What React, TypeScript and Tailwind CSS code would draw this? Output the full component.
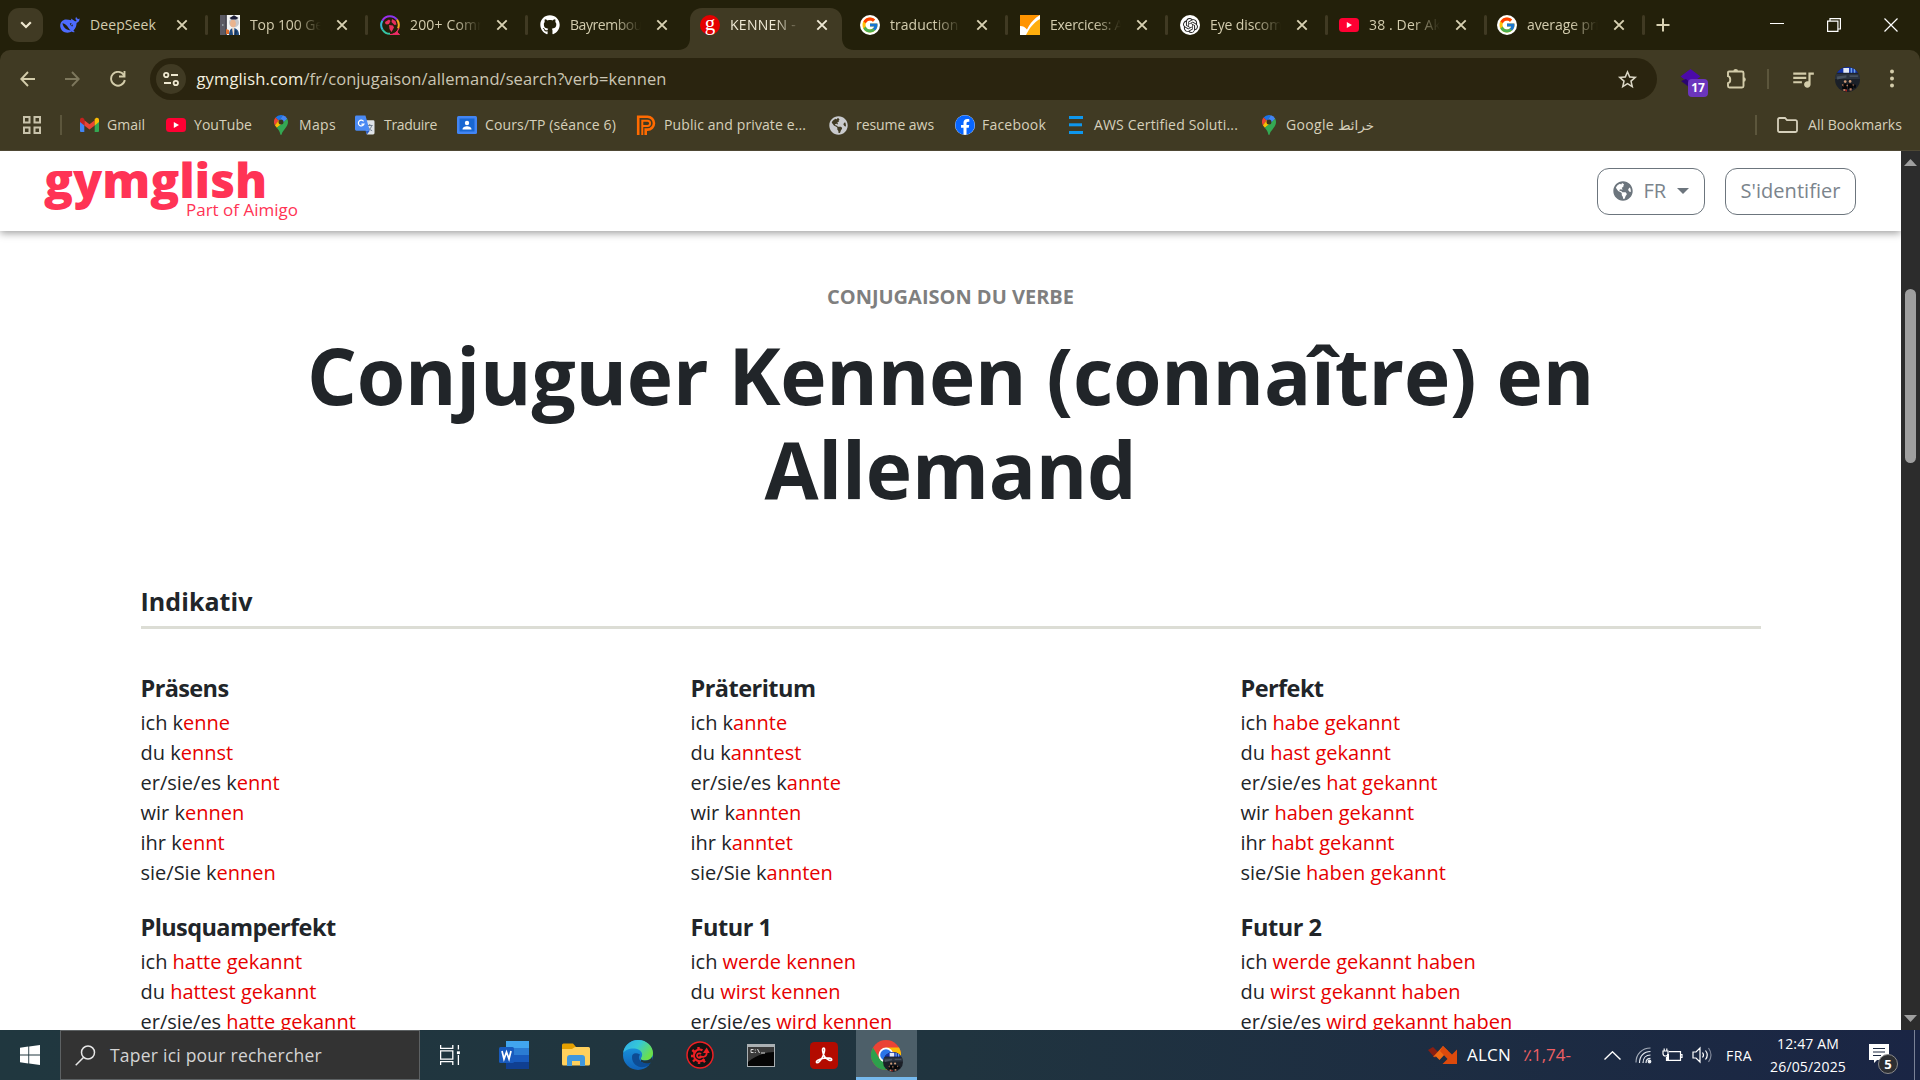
import React, { useLayoutEffect, useRef, useState } from "react";
import { FaGithub, FaFacebook, FaGlobeAmericas } from "react-icons/fa";
import { FcGoogle } from "react-icons/fc";
import { SiOpenai } from "react-icons/si";
import { MdStarBorder, MdQueueMusic } from "react-icons/md";

/** Single line of text whose letter spacing is tuned so that it fills `w` pixels. */
function Fit({ w, children, className = "" }: { w: number; children: string; className?: string }) {
  const ref = useRef<HTMLSpanElement>(null);
  const [ls, setLs] = useState(0);
  useLayoutEffect(() => {
    if (ref.current) setLs((w - ref.current.getBoundingClientRect().width) / children.length);
  }, [w, children]);
  return (
    <span ref={ref} className={"inline-block shrink-0 whitespace-pre " + className} style={{ letterSpacing: ls }}>
      {children}
    </span>
  );
}

/* ---------- favicons ---------- */
const DeepSeek = () => (
  <svg width="20" height="20" viewBox="0 0 20 20" fill="#4d6bfe">
    <path d="M19.6 3.600c-.9.5-1.400.4-2 .1-.9-.5-1.200-1.300-1.300-1.900-.8.8-1 1.900-.5 2.900.3.7.7 1 1 1.400-.8.3-1.900.1-2.800-.7L11.700 3.900c-.5-.4-1-.3-.8.2.3.8.7 1 .3 1.200C8.600 4.700 6 3.900 3.800 4.900 1.200 6 0 8.500.2 11.300.5 15 3.600 17.800 7.400 17.800c1.900 0 3.200-.6 4.100-1.200 1 .5 2.600.8 3.100.4.4-.4-.6-.7-1.200-1.300C15.700 13.300 16.500 10.600 16.600 8c1.700-.5 3-1.900 3-4.400z" />
    <path d="M2.500 8.300c2.500.3 4.500 2.100 5.700 4.200.8 1.300 1.600 2.200 2.400 2.700-2.200.3-4.100-.5-5.700-2.100C3.600 11.700 2.700 10 2.500 8.300z" fill="#23200b" />
    <path d="M9.800 8.200c1.800-.3 3.500 1.500 2.900 3.100-.9.3-2.600-.8-2.900-3.100z" fill="#23200b" />
    <circle cx="11.600" cy="9.700" r=".8" />
  </svg>
);
const Person = () => (
  <svg width="20" height="20" viewBox="0 0 20 20">
    <rect width="20" height="20" fill="#f4f5f5" />
    <rect width="6.500" height="20" fill="#5b5a64" />
    <rect x="5.500" width="1.200" height="20" fill="#3a3a45" />
    <rect x="2" y="9" width="1.500" height="2" fill="#8f9aa0" />
    <ellipse cx="14" cy="7.500" rx="5" ry="5" fill="#c4c6ca" />
    <ellipse cx="13" cy="8.500" rx="2.900" ry="3.800" fill="#eab48e" />
    <path d="M9.500 3L14 .3 18.500 3 16 4.500h-4.500z" fill="#1d1f3a" />
    <path d="M9 20c0-4.500 2-7 4.500-7s5.500 2 5.500 7z" fill="#1f4b80" />
    <path d="M12 12.500h2.500l-.5 7.500h-1z" fill="#f3dcc8" />
    <path d="M6 14l3 1v4H6z" fill="#e2702e" />
    <path d="M15 15l2 1-1 4h-1z" fill="#143055" />
  </svg>
);
const GlobeRing = () => (
  <svg width="20" height="20" viewBox="0 0 20 20" fill="none">
    <path d="M10 1.200A8.800 8.800 0 0 0 2.300 5.700" stroke="#9b2ff0" strokeWidth="2" />
    <path d="M10 1.200A8.800 8.800 0 0 1 17 4.700" stroke="#8a35f0" strokeWidth="2" />
    <path d="M17 4.700A8.800 8.800 0 0 1 18 13.500" stroke="#f5a623" strokeWidth="2" />
    <path d="M2.300 5.700a8.800 8.800 0 0 0 .3 9" stroke="#35b6d5" strokeWidth="2" />
    <path d="M2.600 14.700A8.800 8.800 0 0 0 10 18.800" stroke="#35c6a5" strokeWidth="2" />
    <path d="M18.800 13.500L17 17l2.500 2.800L10 19.500c4 0 7-2.500 8.800-6z" fill="#ef2d68" stroke="#ef2d68" />
    <path d="M5 7l4-2.500 1.500 1.500-1.500 3-2 .5L5.500 9z M12 4l3.500 2 1 3.500-2 .5-3-3z M9 10l4 .5 1 2-2.500 4.500L9.500 14z" fill="#e8305e" />
  </svg>
);
const GymFav = () => (
  <div className="flex h-5 w-5 items-center justify-center rounded-full bg-[#e50000] pb-1 font-['Liberation_Serif',serif] text-[21px] leading-none text-white">g</div>
);
const GoogleFav = () => (
  <div className="flex h-5 w-5 items-center justify-center rounded-full bg-white"><FcGoogle size={18} /></div>
);
const ExerFav = () => (
  <svg width="20" height="20" viewBox="0 0 20 20">
    <rect width="20" height="20" fill="#fff" />
    <path d="M0 0h20C15 3 10 8 7 14.500 5 12 3 11 0 11z" fill="#ff9400" />
    <path d="M20 4v16H6C9 14 13 8 20 4z" fill="#ffae0d" />
  </svg>
);
const GptFav = () => (
  <div className="flex h-5 w-5 items-center justify-center rounded-full bg-white"><SiOpenai size={15} color="#222" /></div>
);
const YtFav = () => (
  <svg width="20" height="20" viewBox="0 0 20 20">
    <rect y="3" width="20" height="14" rx="3.500" fill="#ff0033" />
    <path d="M7.800 7v6l5.200-3z" fill="#fff" />
  </svg>
);
const GmailFav = () => (
  <svg width="19" height="20" viewBox="0 0 19 20">
    <path d="M0 5v11a1 1 0 0 0 1 1h3.300V8.500z" fill="#4285f4" />
    <path d="M19 5v11a1 1 0 0 1-1 1h-3.300V8.500z" fill="#34a853" />
    <path d="M4.300 5.200v5.200l5.200 4 5.200-4V5.200l-5.200 4z" fill="#ea4335" />
    <path d="M0 5c0-2 2-2.700 3.300-1.700l1 .8v6.300L0 7z" fill="#c5221f" />
    <path d="M19 5c0-2-2-2.700-3.300-1.700l-1 .8v6.300L19 7z" fill="#fbbc04" />
  </svg>
);
const MapFav = () => (
  <svg width="14" height="20" viewBox="0 0 14 20">
    <path d="M7 0a7 7 0 0 0-5.400 2.500L4.800 5.500 9 .3A7 7 0 0 0 7 0z" fill="#1a73e8" />
    <path d="M9 .3L4.800 5.500 9.200 8.700l4-5A7 7 0 0 0 9 .3z" fill="#4285f4" />
    <path d="M1.600 2.500A7 7 0 0 0 .9 10.300L4.800 5.500z" fill="#ea4335" />
    <path d="M.9 10.300l1.900 2.500L9.200 8.700 4.800 5.300z" fill="#fbbc04" />
    <path d="M13.200 3.700L2.800 12.800C5 15.200 5.800 17 6.300 19.200c.2 1 1.200 1 1.400 0C8.500 15.500 14 12 14 7a7 7 0 0 0-.8-3.300z" fill="#34a853" />
    <circle cx="7" cy="7" r="2.500" fill="#3a3520" />
  </svg>
);
const TransFav = () => (
  <svg width="20" height="20" viewBox="0 0 21 20">
    <path d="M8 5h11a1.500 1.500 0 0 1 1.500 1.500v12A1.500 1.500 0 0 1 19 20h-6.500z" fill="#dfe3e8" />
    <path d="M12.500 10.500h6M15.500 9v1.500M13.500 16c2.500-1.500 3.600-3.500 4-5.500M14 12.500c.7 1.500 2 2.700 4 3.500" stroke="#6b7a8a" fill="none" />
    <path d="M1.500 0H11l4.500 16H1.500A1.500 1.500 0 0 1 0 14.500v-13A1.500 1.500 0 0 1 1.500 0z" fill="#4a8af4" />
    <path d="M12.500 20L11 16h4.500z" fill="#2a5cc4" />
    <path d="M9 6.200A3 3 0 1 0 9.400 9H6.700" stroke="#fff" strokeWidth="1.300" fill="none" />
  </svg>
);
const CoursFav = () => (
  <svg width="20" height="20" viewBox="0 0 20 20">
    <rect y="1" width="20" height="18" rx="1.500" fill="#4285f4" />
    <rect x="2.500" y="3.500" width="15" height="13" fill="#1967d2" />
    <circle cx="10" cy="8" r="2.200" fill="#fff" />
    <path d="M5.500 14.500c0-2.500 3-3.200 4.500-3.200s4.500.7 4.500 3.200z" fill="#fff" />
  </svg>
);
const PFav = () => (
  <svg width="20" height="20" viewBox="0 0 20 20" fill="none" stroke="#ff6a00">
    <path d="M2.200 20V1.700h9.300a6.300 6.300 0 0 1 0 12.900H9.700V20" strokeWidth="2.600" />
    <path d="M6.300 20V5.700h5.200a2.500 2.500 0 0 1 0 5.200H6.300" strokeWidth="2" />
  </svg>
);
const GlobeFav = () => <FaGlobeAmericas size={19} color="#c9cacd" />;
const FbFav = () => <div className="h-5 w-5 rounded-full bg-white"><FaFacebook size={20} color="#0866ff" /></div>;
const AwsFav = () => (
  <svg width="14" height="20" viewBox="0 0 14 20" fill="#0e97ee">
    <rect y="1" width="14" height="3" /><rect y="8.300" width="13" height="3" /><rect y="16" width="14" height="3" />
  </svg>
);

/* ---------- browser chrome ---------- */
type Tab = { icon: React.ReactNode; title: string; w: number; active?: boolean; sep?: boolean; width?: string };
const tabs: Tab[] = [
  { icon: <DeepSeek />, title: "DeepSeek", w: 66, sep: true },
  { icon: <Person />, title: "Top 100 Ge", w: 73, sep: true },
  { icon: <GlobeRing />, title: "200+ Comr", w: 73, sep: true },
  { icon: <FaGithub size={20} color="#fff" />, title: "Bayrembou", w: 72 },
  { icon: <GymFav />, title: "KENNEN - ", w: 70, active: true },
  { icon: <GoogleFav />, title: "traduction ", w: 72, sep: true },
  { icon: <ExerFav />, title: "Exercices: A", w: 73, sep: true },
  { icon: <GptFav />, title: "Eye discom", w: 72, sep: true, width: "w-[159px]" },
  { icon: <YtFav />, title: "38 . Der Ak", w: 72, sep: true, width: "w-[158px]" },
  { icon: <GoogleFav />, title: "average pri", w: 72, sep: true, width: "w-[159px]" },
];

const Cross = ({ color }: { color: string }) => (
  <svg width="12" height="12" viewBox="0 0 12 12" stroke={color} strokeWidth="1.900"><path d="M1.300 1.300l9.400 9.400M10.700 1.300L1.300 10.700" /></svg>
);

function TabItem({ t }: { t: Tab }) {
  return (
    <div className={"relative flex h-[34px] shrink-0 items-center pl-[10px] " + (t.width ?? "w-[160px]")}>
      {t.active && (
        <svg className="absolute -left-[12px] top-0" width="176" height="42" viewBox="0 0 176 42">
          <path d="M0 42c8 0 12-5 12-12V12C12 5 17 0 24 0h128c7 0 12 5 12 12v18c0 7 4 12 12 12z" fill="#403a23" />
        </svg>
      )}
      <div className="relative flex w-[30px] shrink-0">{t.icon}</div>
      <div className={"relative w-[74px] shrink-0 text-[14px] leading-5 " + (t.title === "DeepSeek" ? "" : "[mask-image:linear-gradient(to_right,#000_60%,transparent_96%)] ") + (t.active ? "text-[#efe9d5]" : "text-[#d3ccae]")}>
        <Fit w={t.w}>{t.title}</Fit>
      </div>
      <div className="relative ml-[12px] flex shrink-0"><Cross color={t.active ? "#efe9d5" : "#d8d1b2"} /></div>
      {t.sep && <div className="ml-[17px] h-5 w-[3px] shrink-0 rounded bg-[#403a23]" />}
    </div>
  );
}

function TabStrip() {
  return (
    <div className="flex h-[50px] items-start bg-[#23200a] pt-2">
      <div className="ml-2 mr-[7px] flex h-[34px] w-[35px] shrink-0 items-center justify-center rounded-[11px] bg-[#403a23]">
        <svg width="12" height="8" viewBox="0 0 12 8" fill="none" stroke="#eee7cf" strokeWidth="2.200"><path d="M1.200 1.200L6 6l4.800-4.800" /></svg>
      </div>
      {tabs.map((t) => <TabItem key={t.title} t={t} />)}
      <div className="ml-[10px] flex h-[34px] items-center">
        <svg width="14" height="14" stroke="#d8d1b2" strokeWidth="2"><path d="M7 .5v13M.5 7h13" /></svg>
      </div>
      <div className="ml-auto mr-[22px] flex h-[34px] items-center gap-[43px]">
        <svg width="14" height="14" stroke="#fff" strokeWidth="1"><path d="M0 5.500h14" /></svg>
        <svg width="14" height="14" fill="none" stroke="#fff" strokeWidth="1.200"><path d="M.6 3.100h10.300v10.300H.6zM3 3V.6h10.400v10.400H11" /></svg>
        <svg width="14" height="14" stroke="#fff" strokeWidth="1.200"><path d="M.5.5l13 13M13.500.5l-13 13" /></svg>
      </div>
    </div>
  );
}

function Avatar({ size }: { size: number }) {
  return (
    <svg width={size} height={size} viewBox="0 0 24 24">
      <clipPath id="av"><circle cx="12" cy="12" r="12" /></clipPath>
      <g clipPath="url(#av)">
        <rect width="24" height="24" fill="#1b2028" />
        <rect width="24" height="5.500" fill="#1432a8" />
        <path d="M8 1h5.500v4.500H8z" fill="#e4eaf4" />
        <path d="M15 1h1.500v4.500H15zM18 1h1.500v4.500H18z" fill="#6fa5e8" />
        <path d="M0 6.500h24v5H0z" fill="#2b333f" />
        <path d="M2 9l9-1v2l-9 2zM14 8h8v1.500h-8z" fill="#47525f" />
        <path d="M7 16h4.500v5H7zM12.500 16h5v5h-5zM18 17h2v3h-2z" fill="#060608" />
        <circle cx="9.800" cy="14" r="1.300" fill="#cf9b78" /><circle cx="14.500" cy="13.800" r="1.300" fill="#cf9b78" />
        <path d="M6.500 17l1.500-1v3zM17 16l1.500 1.500L17 18zM8 21h2v2H8zM14 20.500h2v2h-2zM11 17h1.500v1.500H11z" fill="#b5795c" />
        <path d="M10 21.500h1.500v2H10z" fill="#b0201c" />
      </g>
    </svg>
  );
}

function Toolbar() {
  return (
    <div className="bg-[#23200a]">
      <div className="flex h-[50px] items-center rounded-t-[10px] bg-[#403a23] pt-2">
        <div className="ml-5 flex w-[130px] shrink-0 items-center text-[#d3ccaa]">
          <svg width="15" height="16" viewBox="0 0 15 16" fill="none" stroke="currentColor" strokeWidth="1.900"><path d="M15 8H1.500M8 1L1.300 8 8 15" /></svg>
          <svg className="ml-[30px]" width="15" height="16" viewBox="0 0 15 16" fill="none" stroke="#7d775c" strokeWidth="1.900"><path d="M0 8h13.500M7 1l6.700 7L7 15" /></svg>
          <svg className="ml-[30px]" width="16" height="16" viewBox="0 0 16 16" fill="none" stroke="currentColor" strokeWidth="1.900"><path d="M13.800 4A6.900 6.900 0 1 0 14.800 9M14.500 0V5.500H9" /></svg>
        </div>
        <div className="flex h-[42px] w-[1507px] shrink-0 items-center rounded-full bg-[#2a240f]">
          <div className="ml-[6px] flex h-[30px] w-[30px] items-center justify-center rounded-full bg-[#403a23]">
            <svg width="16" height="16" viewBox="0 0 16 16" fill="none" stroke="#eee8d0" strokeWidth="1.800"><circle cx="3.200" cy="4" r="2.200" /><path d="M8 4h7M1 12h7" /><circle cx="12.800" cy="12" r="2.200" /></svg>
          </div>
          <div className="ml-[10.500px] mt-[1px] flex text-[16.500px] text-[#cbc6b4]">
            <Fit w={107} className="text-[#f3efdf]">gymglish.com</Fit>
            <Fit w={363}>/fr/conjugaison/allemand/search?verb=kennen</Fit>
          </div>
          <MdStarBorder size={23} color="#dbd7c6" className="ml-auto mr-[18px]" />
        </div>
        <div className="relative ml-[22px] h-[26px] w-7 shrink-0">
          <svg width="28" height="26" viewBox="0 0 28 26"><path d="M11.500 3l10 7.500-10 7.500-10-7.500z" fill="#4b0aa8" /><path d="M2 15l5-2 6 5-3 3z" fill="#2a0470" /></svg>
          <div className="absolute left-[9px] top-[13px] flex h-[18px] w-5 items-center justify-center rounded-[4px] bg-[#6b35bd] text-[12px] font-bold leading-none text-white">17</div>
        </div>
        <svg className="ml-[19px] shrink-0" width="22" height="22" viewBox="0 0 22 22" fill="none" stroke="#d3ccaa" strokeWidth="1.900">
          <path d="M3 3.500h13a1.500 1.500 0 0 1 1.500 1.500v13a1.500 1.500 0 0 1-1.500 1.500H3.500A1.500 1.500 0 0 1 2 18v-2.800c3-.8 3-6.200 0-7V4.500a1 1 0 0 1 1-1z" />
          <path d="M7.300 3.500a2.400 2.400 0 0 1 4.800 0zM17.500 9.200a2.300 2.300 0 0 1 0 4.600z" fill="#d3ccaa" stroke="none" />
        </svg>
        <div className="ml-[19px] h-5 w-[2px] bg-[#5c563c]" />
        <MdQueueMusic size={26} color="#d3ccaa" className="ml-[21px] shrink-0" />
        <div className="ml-[19px] shrink-0"><Avatar size={25} /></div>
        <svg className="ml-[29px] shrink-0" width="6" height="20" fill="#d3ccaa"><circle cx="3" cy="2.500" r="2" /><circle cx="3" cy="9.500" r="2" /><circle cx="3" cy="16.500" r="2" /></svg>
      </div>
    </div>
  );
}

type Mark = { icon: React.ReactNode; text: string; w: number; box: string; gap: string };
const marks: Mark[] = [
  { icon: <GmailFav />, text: "Gmail", w: 38, box: "w-[86px]", gap: "w-[27px]" },
  { icon: <YtFav />, text: "YouTube", w: 58, box: "w-[108px]", gap: "w-[28px]" },
  { icon: <MapFav />, text: "Maps", w: 37, box: "w-[81px]", gap: "w-[25px]" },
  { icon: <TransFav />, text: "Traduire", w: 53, box: "w-[102px]", gap: "w-[29px]" },
  { icon: <CoursFav />, text: "Cours/TP (séance 6)", w: 131, box: "w-[179px]", gap: "w-[28px]" },
  { icon: <PFav />, text: "Public and private e...", w: 142, box: "w-[193px]", gap: "w-[28px]" },
  { icon: <GlobeFav />, text: "resume aws", w: 78, box: "w-[126px]", gap: "w-[27px]" },
  { icon: <FbFav />, text: "Facebook", w: 64, box: "w-[114px]", gap: "w-[27px]" },
  { icon: <AwsFav />, text: "AWS Certified Soluti...", w: 144, box: "w-[193px]", gap: "w-[25px]" },
];

function Bookmarks() {
  return (
    <div className="flex h-[51px] items-center border-b border-[#4e4834] bg-[#403a23] text-[14px] text-[#d6d0bb]">
      <svg className="ml-[23px] shrink-0" width="18" height="18" fill="none" stroke="#c9c3ab" strokeWidth="2"><path d="M1 1h5.500v5.500H1zM11.500 1H17v5.500h-5.500zM1 11.500h5.500V17H1zM11.500 11.500H17V17h-5.500z" /></svg>
      <div className="ml-[19px] mr-[18px] h-5 w-[2px] shrink-0 bg-[#5c563c]" />
      {marks.map((m) => (
        <div key={m.text} className={"flex shrink-0 items-center " + m.box}>
          <div className={"shrink-0 " + m.gap}>{m.icon}</div>
          <Fit w={m.w} className="-mt-[2px]">{m.text}</Fit>
        </div>
      ))}
      <div className="flex shrink-0 items-center">
        <div className="w-[24px]"><MapFav /></div>
        <Fit w={48} className="-mt-[2px]">Google</Fit>
        <span className="ml-1 text-[13.500px] font-['DejaVu_Sans',sans-serif]" dir="rtl">خرائط</span>
      </div>
      <div className="ml-auto h-5 w-[2px] bg-[#5c563c]" />
      <svg className="ml-[20px]" width="21" height="16" viewBox="0 0 21 16" fill="none" stroke="#d6d0bb" strokeWidth="1.800"><path d="M1 2.500A1.500 1.500 0 0 1 2.500 1H8l2 2.200h8.500A1.500 1.500 0 0 1 20 4.700v8.800a1.500 1.500 0 0 1-1.500 1.500h-16A1.500 1.500 0 0 1 1 13.500z" /></svg>
      <Fit w={94} className="-mt-[2px] ml-[10px] mr-[18px]">All Bookmarks</Fit>
    </div>
  );
}

/* ---------- page ---------- */
type Row = [string, string];
const tenses: { name: string; w: number; rows: Row[] }[] = [
  { name: "Präsens", w: 88, rows: [["ich k", "enne"], ["du k", "ennst"], ["er/sie/es k", "ennt"], ["wir k", "ennen"], ["ihr k", "ennt"], ["sie/Sie k", "ennen"]] },
  { name: "Präteritum", w: 125, rows: [["ich k", "annte"], ["du k", "anntest"], ["er/sie/es k", "annte"], ["wir k", "annten"], ["ihr k", "anntet"], ["sie/Sie k", "annten"]] },
  { name: "Perfekt", w: 83, rows: [["ich ", "habe gekannt"], ["du ", "hast gekannt"], ["er/sie/es ", "hat gekannt"], ["wir ", "haben gekannt"], ["ihr ", "habt gekannt"], ["sie/Sie ", "haben gekannt"]] },
  { name: "Plusquamperfekt", w: 195, rows: [["ich ", "hatte gekannt"], ["du ", "hattest gekannt"], ["er/sie/es ", "hatte gekannt"]] },
  { name: "Futur 1", w: 81, rows: [["ich ", "werde kennen"], ["du ", "wirst kennen"], ["er/sie/es ", "wird kennen"]] },
  { name: "Futur 2", w: 81, rows: [["ich ", "werde gekannt haben"], ["du ", "wirst gekannt haben"], ["er/sie/es ", "wird gekannt haben"]] },
];

function Page() {
  return (
    <div className="flex h-[879px] overflow-hidden bg-white">
      <div className="w-[1901px] shrink-0 overflow-hidden text-[#212529]">
        <header className="relative flex h-20 items-center bg-white shadow-[0_2px_8px_rgba(0,0,0,0.4)]">
          <div className="ml-[44px] flex h-20 w-[260px] flex-col items-start text-[#ff3355]">
            <Fit w={223} className="-mt-[3px] h-[50px] text-[48px] font-extrabold leading-[64px]">gymglish</Fit>
            <Fit w={112} className="ml-[142px] text-[17px] leading-6">Part of Aimigo</Fit>
          </div>
          <div className="ml-auto mr-[45px] flex gap-5 text-[20px] text-[#6c757d]">
            <div className="flex h-[47px] w-[108px] items-center rounded-[12px] border border-[#6c757d] pl-[15px]">
              <FaGlobeAmericas size={20} />
              <span className="ml-[10.500px] text-[#7b848c]">FR</span>
              <svg className="ml-[10.500px]" width="12" height="6" fill="#6c757d"><path d="M0 0h12L6 6z" /></svg>
            </div>
            <div className="flex h-[47px] w-[131px] items-center justify-center rounded-[12px] border border-[#6c757d] text-[#7b848c]">
              <Fit w={100}>S'identifier</Fit>
            </div>
          </div>
        </header>
        <div className="flex flex-col items-center pt-[51px]">
          <Fit w={247} className="text-[20px] font-bold leading-[30px] text-[#7f7f7f]">CONJUGAISON DU VERBE</Fit>
          <h1 className="mt-[16px] flex flex-col items-center text-[78.400px] font-bold leading-[94px]">
            <Fit w={1287}>Conjuguer Kennen (connaître) en</Fit>
            <Fit w={372}>Allemand</Fit>
          </h1>
        </div>
        <div className="ml-[140.500px] w-[1620px]">
          <h2 className="mt-[68px] h-[45px] border-b-[3px] border-[#dcddd5] text-[25px] font-bold leading-[34px]"><Fit w={112}>Indikativ</Fit></h2>
          <div className="grid grid-cols-3 gap-x-[30px] pt-[42px]">
            {tenses.map((t) => (
              <div key={t.name} className="h-[239px]">
                <h3 className="mb-[3px] h-[34px] text-[23.500px] font-bold leading-[34px]"><Fit w={t.w}>{t.name}</Fit></h3>
                {t.rows.map(([a, b], i) => (
                  <div key={i} className="h-[30px] whitespace-pre text-[20px] leading-[30px]">{a}<span className="text-[#e60000]">{b}</span></div>
                ))}
              </div>
            ))}
          </div>
        </div>
      </div>
      <div className="flex w-[19px] shrink-0 flex-col items-center bg-[#2c2c2c] pt-2">
        <svg width="13" height="7" fill="#9f9f9f"><path d="M0 7h13L6.500 0z" /></svg>
        <div className="mt-[123px] h-[174px] w-[11px] rounded-full bg-[#9f9f9f]" />
        <svg className="mb-[8px] mt-auto" width="13" height="7" fill="#9f9f9f"><path d="M0 0h13L6.500 7z" /></svg>
      </div>
    </div>
  );
}

/* ---------- taskbar ---------- */
const Word = () => (
  <svg width="30" height="28" viewBox="0 0 30 28">
    <rect x="7" width="23" height="7" fill="#41a5ee" /><rect x="7" y="7" width="23" height="7" fill="#2b7cd3" />
    <rect x="7" y="14" width="23" height="7" fill="#185abd" /><rect x="7" y="21" width="23" height="7" fill="#103f91" />
    <rect y="6" width="15" height="16" rx="1.500" fill="#185abd" />
    <path d="M3 10l2 8 2.500-7 2.500 7 2-8" fill="none" stroke="#fff" strokeWidth="1.700" />
  </svg>
);
const Explorer = () => (
  <svg width="28" height="24" viewBox="0 0 28 24">
    <path d="M0 2a1.500 1.500 0 0 1 1.500-1.500H11L14 4v5H0z" fill="#e5a000" />
    <path d="M0 6h10l3-2h13.500A1.500 1.500 0 0 1 28 5.500V21a1.500 1.500 0 0 1-1.500 1.500h-25A1.500 1.500 0 0 1 0 21z" fill="#ffd05c" />
    <path d="M5 23v-8a3 3 0 0 1 3-3h12a3 3 0 0 1 3 3v8h-5v-5h-8v5z" fill="#3f97dd" />
  </svg>
);
const Edge = () => (
  <svg width="30" height="30" viewBox="0 0 30 30">
    <defs>
      <linearGradient id="e1" x1="0" y1="0" x2="1" y2=".5"><stop offset="0" stopColor="#2fa8e8" /><stop offset=".5" stopColor="#35c8d8" /><stop offset="1" stopColor="#6be04a" /></linearGradient>
      <linearGradient id="e2" x1="0" y1="0" x2="0" y2="1"><stop offset="0" stopColor="#1ba0e6" /><stop offset="1" stopColor="#1061b8" /></linearGradient>
    </defs>
    <circle cx="15" cy="15" r="15" fill="url(#e2)" />
    <path d="M.2 13C1 5.500 7.500 0 15 0c9 0 15 6.500 15 13 0 5-3.500 7.500-8 7.500-3 0-5-1-4-2.500 3-4 0-9-6-9.500C6.500 8 2 10 .2 13z" fill="url(#e1)" />
    <path d="M18 18c-1 1.500 1 2.500 4 2.500 3.500 0 6-1.300 7.200-4L30 24l-4 1-8-3z" fill="#20363f" />
    <path d="M9 17c0 7 6 11 12 10 3-.5 5.500-2 7-4.500-4 1.500-8 1-10.500-1.500-2-2-2-4.500-.5-6.500-4-2-8-1.500-8 2.500z" fill="#0d4c94" />
  </svg>
);
const RedGear = () => (
  <svg width="28" height="28" viewBox="0 0 28 28" fill="none" stroke="#ed2024">
    <circle cx="14" cy="14" r="13" fill="#141414" strokeWidth="1.500" />
    <path d="M16.500 9.200A5.800 5.800 0 1 0 18.300 18" strokeWidth="2.200" />
    <path d="M12.500 9V6M8.600 11L6.300 9M7.500 15H5M9 18.500l-2 2M13 20.500V23M17 19l2 2.200" strokeWidth="2.400" />
    <path d="M15 13a2.300 2.300 0 1 0 0 3.200M13.500 15c2.500 1.500 7 1.500 7.200-3" strokeWidth="1.800" />
    <path d="M17 12l3.700-5.500 3 5.500z" fill="#ed2024" stroke="none" />
  </svg>
);
const Cmd = () => (
  <svg width="28" height="23" viewBox="0 0 28 23">
    <rect width="28" height="23" fill="#aab0b3" /><rect x="1" y="3" width="26" height="19" fill="#050505" />
    <path d="M1 3h26v5C18 8 8 12 1 18z" fill="#3a3a3a" />
    <path d="M6.500 5.500H4v3h2.500M8.300 5.500v1M8.300 8v1M10.500 5l2 4M14 9h4" stroke="#e8e8e8" fill="none" strokeWidth=".9" />
  </svg>
);
const Acrobat = () => (
  <svg width="28" height="27" viewBox="0 0 28 27">
    <rect width="28" height="27" rx="4.500" fill="#b30b00" />
    <path d="M13.500 6c2 0 1 5-1 9-1.700 3.500-4.500 6.500-5.800 5.600-1.500-1.200 2.500-3.600 7-4.300 4-.6 8-.3 8 1.400 0 2-4.500.3-7-3-2-2.700-3-8.700-1.200-8.700z" fill="none" stroke="#fff" strokeWidth="1.600" />
  </svg>
);
const Chrome = () => (
  <div className="relative ml-[15px] h-[30px] w-8">
    <svg width="30" height="30" viewBox="0 0 30 30">
      <circle cx="15" cy="15" r="15" fill="#ea4335" />
      <path d="M2 7.500A15 15 0 0 0 15 30l6.500-11.200L15 22 8.500 18.700z" fill="#2da04c" />
      <path d="M28 7.500A15 15 0 0 1 15 30l6.500-11.200V11L15 7.500z" fill="#fbbc05" />
      <circle cx="15" cy="15" r="7.500" fill="#fff" /><circle cx="15" cy="15" r="5.800" fill="#2a74e8" />
    </svg>
    <div className="absolute left-[12px] top-[12px]"><Avatar size={20} /></div>
  </div>
);

function Taskbar() {
  return (
    <div className="flex h-[50px] items-center bg-linear-to-r from-[#20373f] via-[#20343f] to-[#1a2544] text-white">
      <div className="flex w-[60px] shrink-0 justify-center">
        <svg width="20" height="20" viewBox="0 0 20 20" fill="#fff"><path d="M0 2.800l8.300-1.200v8H0zM9.200 1.400L20 0v9.600H9.200zM0 10.500h8.300v8L0 17.300zM9.200 10.500H20V20L9.200 18.600z" /></svg>
      </div>
      <div className="flex h-[50px] w-[360px] shrink-0 items-center border border-[#5d6163] bg-[#333333] pl-[14px]">
        <svg width="21" height="21" viewBox="0 0 21 21" fill="none" stroke="#e8e8e8" strokeWidth="1.500"><circle cx="13" cy="7.500" r="6.500" /><path d="M8.500 12.500L.7 20.300" /></svg>
        <Fit w={212} className="ml-[14px] text-[17.500px] text-[#d4d4d4]">Taper ici pour rechercher</Fit>
      </div>
      <svg className="ml-5 shrink-0" width="20" height="20" fill="none" stroke="#fff" strokeWidth="1.300"><path d="M.6 0v3.300h12.200V0M.6 20v-3.300h12.200V20M.6 5.800h12.200v8.400H.6zM18.400 0v4.500M18.400 10v10" /><path d="M16.900 6.300h3v2.800h-3z" fill="#fff" stroke="none" /></svg>
      <div className="ml-[39px] flex h-full flex-1 items-center">
        <div className="w-[63px] shrink-0"><Word /></div>
        <div className="w-[61px] shrink-0"><Explorer /></div>
        <div className="w-[63px] shrink-0"><Edge /></div>
        <div className="w-[61px] shrink-0"><RedGear /></div>
        <div className="w-[63px] shrink-0"><Cmd /></div>
        <div className="w-[46px] shrink-0"><Acrobat /></div>
        <div className="flex h-full w-[61px] shrink-0 items-center border-b-[3px] border-[#76b9ed] bg-[#4d5f69] pt-[3px]"><Chrome /></div>
      </div>
      <div className="flex h-full w-[493px] shrink-0 items-center">
        <svg className="ml-[1px] shrink-0" width="30" height="19" viewBox="0 0 30 19">
          <path d="M0 4l5-3 6 6-4 5z" fill="#8a1f12" />
          <path d="M5 11L15 0l5 5-8.500 9L8 10.500z" fill="#ef6a14" />
          <path d="M15 0l9 8.500 5-5V18H14.500l5-5L12 5z" fill="#dc4a0c" />
        </svg>
        <Fit w={44} className="ml-[9px] text-[17px]">ALCN</Fit>
        <Fit w={50} className="ml-[12px] text-[17px] text-[#ee6064]">٪1,74-</Fit>
        <svg className="ml-[33px] shrink-0" width="17" height="9" fill="none" stroke="#fff" strokeWidth="1.400"><path d="M.5 8.500l8-7.700 8 7.700" /></svg>
        <svg className="ml-[14px] shrink-0" width="17" height="17" fill="none" stroke="#e8ecf2" strokeWidth="1.200"><path d="M1 15.500C1 7 7 1 15.500 1" stroke="#a5adba" /><path d="M4.500 16C4.500 9 9 4.500 15.500 4.500M8 16c0-5 3-8 7.500-8M11 16c0-3 1.500-4.700 4.500-4.700" /><circle cx="14.500" cy="14.500" r="1.300" fill="#fff" /></svg>
        <svg className="ml-[10px] shrink-0" width="21" height="14" fill="none" stroke="#fff" strokeWidth="1.200"><path d="M7 3.600h11.500v8.800h-14V9M18.500 6.500h1.500v3h-1.500M1 3h5v2.500a2.500 2.500 0 0 1-5 0zM2.200 3V.5M4.800 3V.5" /><path d="M5 6h2v6H5z" fill="#fff" stroke="none" /></svg>
        <svg className="ml-[9px] shrink-0" width="22" height="18" fill="none" stroke="#fff" strokeWidth="1.200"><path d="M1 6h3l4-4v14l-4-4H1zM10.500 6.500q2 2.500 0 5M13.500 4.500q3.500 4.500 0 9" /><path d="M16.500 2q5 7 0 14" stroke="#7f8798" /></svg>
        <Fit w={26} className="ml-[12px] text-[14px]">FRA</Fit>
        <div className="ml-[18px] flex w-[76px] shrink-0 flex-col items-center text-[14px] leading-[23px]">
          <Fit w={62}>12:47 AM</Fit>
          <Fit w={76}>26/05/2025</Fit>
        </div>
        <div className="relative ml-[23px] h-8 w-[30px] shrink-0">
          <svg className="mt-[5px]" width="20" height="19" viewBox="0 0 20 19"><path d="M0 0h20v16H8l-3 3v-3H0z" fill="#fff" /><path d="M4 4.500h12M4 8h12M4 11.500h8" stroke="#1c2941" strokeWidth="1.200" /></svg>
          <div className="absolute left-[9px] top-[15px] flex h-5 w-5 items-center justify-center rounded-full border border-[#8b8b8b] bg-[#2d2f33] text-[13px] font-bold leading-none">5</div>
        </div>
        <div className="ml-auto mr-[5px] h-full w-px bg-[#7a8296]" />
      </div>
    </div>
  );
}

export default function App() {
  return (
    <div className="h-[1080px] w-[1920px] overflow-hidden bg-white font-['Open_Sans','Noto_Sans',sans-serif]">
      <TabStrip />
      <Toolbar />
      <Bookmarks />
      <Page />
      <Taskbar />
    </div>
  );
}
